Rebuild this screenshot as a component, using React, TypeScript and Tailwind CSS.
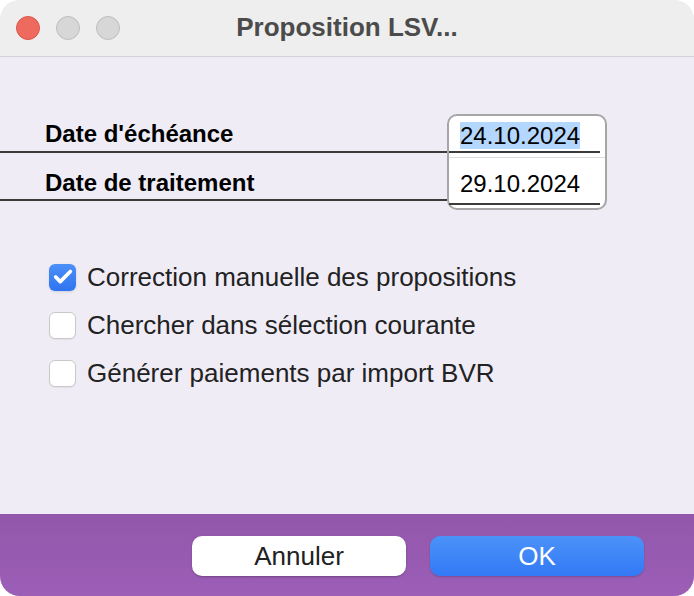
import { Check } from "lucide-react";

const font = { fontFamily: '"Liberation Sans", Arial, sans-serif' };

function Light({ color, border }: { color: string; border: string }) {
  return <div className={`w-[24px] h-[24px] rounded-full border ${color} ${border}`} />;
}

function Box({ checked, label }: { checked?: boolean; label: string }) {
  return (
    <div className="flex items-center h-[48px]">
      {checked ? (
        <div className="w-[27px] h-[27px] rounded-[6px] bg-gradient-to-b from-[#4b8ff8] to-[#2f74f0] flex items-center justify-center shadow-sm">
          <Check className="w-[22px] h-[22px] text-white" strokeWidth={4} />
        </div>
      ) : (
        <div className="w-[27px] h-[27px] rounded-[6px] bg-white border border-[#c9c9c9] shadow-[0_1px_1px_rgba(0,0,0,0.06)]" />
      )}
      <span className="ml-[11px] text-[26px] text-[#222]">{label}</span>
    </div>
  );
}

export default function App() {
  return (
    <div className="w-[694px] h-[596px] bg-white" style={font}>
      <div className="w-full h-full rounded-[20px] overflow-hidden flex flex-col bg-[#efecf6]">
        {/* Title bar */}
        <div className="h-[57px] shrink-0 bg-[#eeeeee] border-b border-[#d4d2d8] flex items-center px-[16px] relative">
          <div className="flex gap-[16px]">
            <Light color="bg-[#ee6a5f]" border="border-[#d9574c]" />
            <Light color="bg-[#d7d7d7]" border="border-[#bdbdbd]" />
            <Light color="bg-[#d7d7d7]" border="border-[#bdbdbd]" />
          </div>
          <div className="absolute inset-0 flex items-center justify-center pb-[2px]">
            <span className="text-[26px] font-bold text-[#4b4b4b]">Proposition LSV...</span>
          </div>
        </div>

        {/* Body */}
        <div className="flex-1 pt-[57px]">
          <div className="flex items-start">
            <div className="w-[447px]">
              <div className="h-[39px] border-b-2 border-[#3b3b3b] pl-[45px] pt-[2px] text-[24px] font-bold text-black">
                Date d'échéance
              </div>
              <div className="h-[48px] border-b-2 border-[#3b3b3b] pl-[45px] pt-[12px] text-[24px] font-bold text-black">
                Date de traitement
              </div>
            </div>
            <div className="w-[160px] border-2 border-[#a6a6a6] rounded-[10px] bg-white pb-[3px]">
              <div className="h-[37px] border-b-2 border-[#3b3b3b] mr-[5px] pl-[11px] pt-[2px] text-[24px] text-black">
                <span className="bg-[#b3d7ff]">24.10.2024</span>
              </div>
              <div className="h-[48px] border-b-2 border-[#3b3b3b] mr-[5px] text-[24px] text-black">
                <div className="mt-[4px] border-t border-[#dcdcdc] -mr-[5px] pl-[11px] pt-[8px]">29.10.2024</div>
              </div>
            </div>
          </div>

          <div className="mt-[43px] pl-[49px]">
            <Box checked label="Correction manuelle des propositions" />
            <Box label="Chercher dans sélection courante" />
            <Box label="Générer paiements par import BVR" />
          </div>
        </div>

        {/* Footer */}
        <div className="h-[82px] shrink-0 bg-gradient-to-b from-[#9257ab] to-[#9c5eb7] flex justify-end items-start pt-[22px] pr-[50px] gap-[24px]">
          <button className="w-[214px] h-[40px] rounded-[10px] bg-white text-[26px] text-[#222] shadow-[0_1px_2px_rgba(0,0,0,0.25)]">
            Annuler
          </button>
          <button className="w-[214px] h-[40px] rounded-[10px] bg-gradient-to-b from-[#4b92f8] to-[#3379f6] text-[26px] text-white shadow-[0_1px_2px_rgba(0,0,0,0.2)]">
            OK
          </button>
        </div>
      </div>
    </div>
  );
}
